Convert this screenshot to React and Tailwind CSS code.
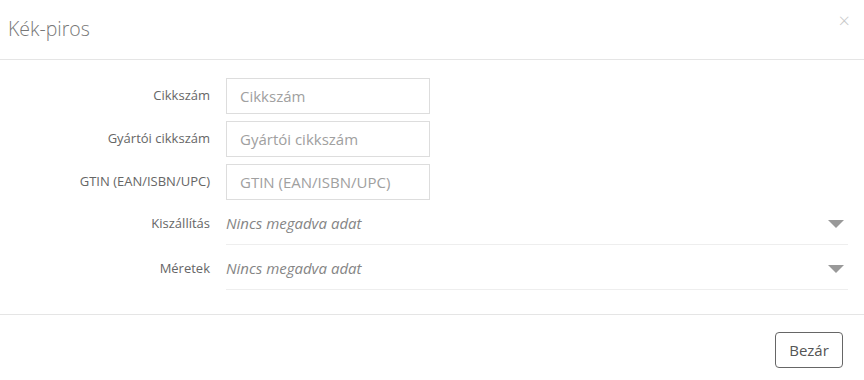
const font = { fontFamily: '"Open Sans", "Noto Sans", sans-serif' };

function InputRow({ label, last }) {
  return (
    <div className={`flex items-center h-[36px] ${last ? "" : "mb-[7px]"}`}>
      <label className="w-[210px] text-right text-[13px] text-[#666]">{label}</label>
      <input
        type="text"
        placeholder={label}
        className="ml-[16px] w-[204px] h-[36px] border border-[#ddd] px-[13px] text-[15px] text-[#555] placeholder:text-[#a0a0a0] outline-none"
        style={font}
      />
    </div>
  );
}

function SelectRow({ label }) {
  return (
    <div className="flex items-center h-[45px]">
      <span className="w-[210px] text-right text-[13px] text-[#666] pt-[3px]">{label}</span>
      <div className="ml-[16px] w-[622px] h-full flex items-center justify-between border-b border-[#eee] pt-[3px]">
        <span className="text-[15px] italic text-[#858585]">Nincs megadva adat</span>
        <svg width="16" height="8" viewBox="0 0 16 8" className="mr-[4px]">
          <path d="M0 0 L16 0 L8 8 Z" fill="#999" />
        </svg>
      </div>
    </div>
  );
}

export default function App() {
  return (
    <div className="w-[864px] h-[380px] bg-white overflow-hidden" style={font}>
      <div className="h-[60px] flex items-center justify-between border-b border-[#e5e5e5] pl-[8px] pr-[14px]">
        <h4 className="text-[19.5px] font-light text-[#777] mb-[2px]">Kék-piros</h4>
        <button className="text-[#c8c8c8] text-[20px] leading-none mb-[18px] font-light">×</button>
      </div>
      <div className="pt-[18px] pb-[24px] border-b border-[#e5e5e5]">
        <InputRow label="Cikkszám" />
        <InputRow label="Gyártói cikkszám" />
        <InputRow label="GTIN (EAN/ISBN/UPC)" last />
        <SelectRow label="Kiszállítás" />
        <SelectRow label="Méretek" />
      </div>
      <div className="flex justify-end pt-[17px] pr-[21px]">
        <button className="w-[68px] h-[36px] border border-[#666] rounded-[4px] text-[15px] text-[#555]" style={font}>
          Bezár
        </button>
      </div>
    </div>
  );
}
